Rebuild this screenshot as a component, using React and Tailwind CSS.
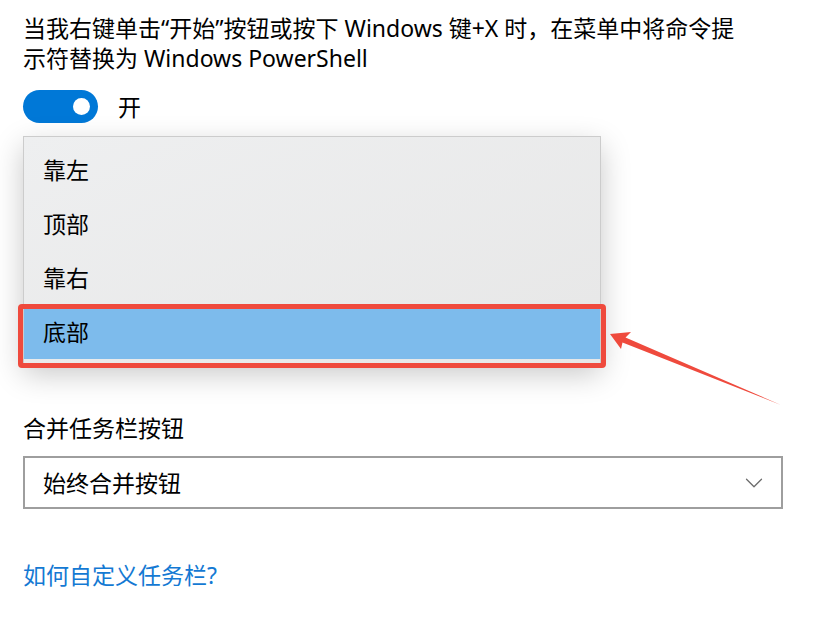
import { ChevronDown } from "lucide-react";

const positions = ["靠左", "顶部", "靠右", "底部"];

function Toggle() {
  return (
    <div className="flex items-center gap-5">
      <div className="flex h-[33px] w-[75px] items-center justify-end rounded-full bg-[#0078d7] pr-[8px]">
        <div className="h-[17px] w-[17px] rounded-full bg-white" />
      </div>
      <span>开</span>
    </div>
  );
}

export default function App() {
  return (
    <div
      className="relative h-[621px] w-[838px] overflow-hidden bg-white text-[23px] leading-[30px] text-black"
      style={{ fontFamily: '"Noto Sans", "Noto Sans CJK SC", sans-serif' }}
    >
      <div className="flex flex-col px-[23px] pt-[13px]">
        <p>
          当我右键单击“开始”按钮或按下 Windows 键+X 时，在菜单中将命令提
          <br />
          示符替换为 Windows PowerShell
        </p>

        <div className="mt-[17px]">
          <Toggle />
        </div>

        {/* position dropdown (open) */}
        <div className="mt-[13px] w-[578px] border border-[#cccccc] bg-gradient-to-br from-[#eeeff0] to-[#e7e7e7] pt-[6px] pb-[4px] shadow-[0_10px_28px_rgba(0,0,0,0.22)]">
          {positions.map((p, i) => {
            const sel = i === positions.length - 1;
            return (
              <div
                key={p}
                className={`relative flex h-[54px] items-center pl-[19px] ${sel ? "bg-[#7dbbec]" : ""}`}
              >
                {p}
                {sel && (
                  <span className="absolute -left-[6px] -right-[6px] -top-[1px] -bottom-[9px] rounded-[4px] border-[5px] border-[#ef4a3d]" />
                )}
              </div>
            );
          })}
        </div>

        <div className="mt-[49px]">合并任务栏按钮</div>

        <div className="mt-[13px] flex h-[53px] w-[760px] items-center justify-between border-[2.5px] border-[#9e9e9e] pl-[18px] pr-[12px]">
          <span>始终合并按钮</span>
          <ChevronDown className="h-[30px] w-[30px] text-[#6b6b6b]" strokeWidth={1} />
        </div>

        <a className="mt-[51px] text-[#1479d3]" href="#">
          如何自定义任务栏?
        </a>
      </div>

      {/* annotation arrow */}
      <svg className="pointer-events-none absolute left-0 top-0" width="838" height="621">
        <polygon
          points="610,334 631,332 625.5,337.5 781,405 622.5,342.5 621,349"
          fill="#ef4a3d"
        />
      </svg>
    </div>
  );
}
